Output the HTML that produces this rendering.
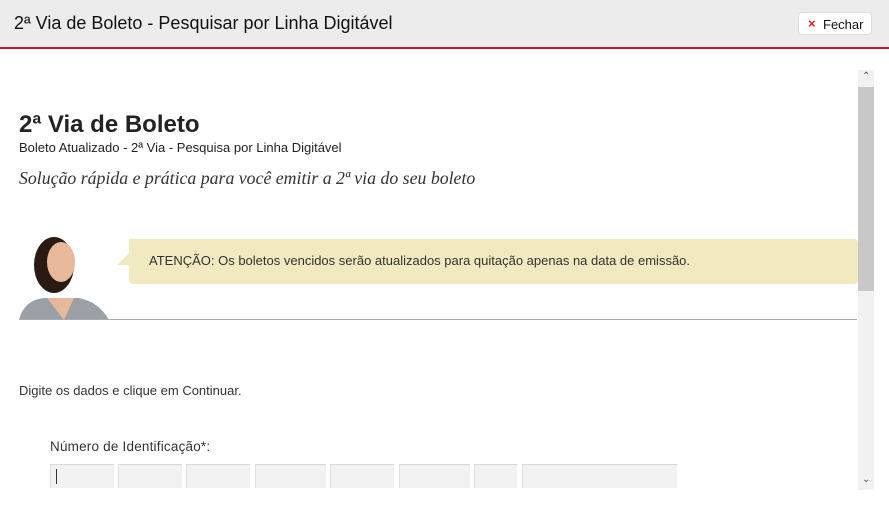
<!DOCTYPE html>
<html><head><meta charset="utf-8"><style>
body{margin:0;width:889px;height:506px;overflow:hidden;background:#fff;font-family:"Liberation Sans",Arial,sans-serif;position:relative}
.hdr{position:absolute;left:0;top:0;width:889px;height:47px;background:#ececec;border-bottom:2px solid #c8102e}
.hdr h1{position:absolute;left:14px;top:13px;margin:0;font-size:18px;font-weight:normal;color:#111}
.btn{position:absolute;left:798px;top:12px;width:74px;height:23px;border:1px solid #ddd;border-radius:4px;background:#fff;font-size:13px;color:#111;box-sizing:border-box}
.btn span{position:absolute;left:9px;top:3px;color:#e02020;font-weight:bold}
.btn b{position:absolute;left:24px;top:4px;font-weight:normal}
.a{position:absolute;white-space:nowrap}
.sb{position:absolute;left:858px;top:70px;width:16px;height:420px;background:#f1f1f1}
.th{position:absolute;left:858px;top:87px;width:16px;height:204px;background:#c8c8c8}
.in{position:absolute;top:464px;height:24px;background:#f2f2f2;border-top:1px solid #d8d8d8;border-left:1px solid #e0e0e0;box-sizing:border-box}
</style></head><body>
<div class="hdr"><h1>2ª Via de Boleto - Pesquisar por Linha Digitável</h1>
<div class="btn"><span>×</span><b>Fechar</b></div></div>
<div class="sb"></div><div class="th"></div>
<div class="a" style="left:862px;top:71px;font-size:10px;color:#555">⌃</div>
<div class="a" style="left:862px;top:474px;font-size:10px;color:#555">⌄</div>
<div class="a" style="left:19px;top:111px;font-size:24px;font-weight:bold;color:#222">2ª Via de Boleto</div>
<div class="a" style="left:19px;top:140px;font-size:13px;color:#222">Boleto Atualizado - 2ª Via - Pesquisa por Linha Digitável</div>
<div class="a" style="left:19px;top:168px;font-size:17.8px;font-style:italic;color:#333;font-family:'Liberation Serif',serif">Solução rápida e prática para você emitir a 2ª via do seu boleto</div>
<svg class="a" style="left:19px;top:220px" width="96" height="100">
<ellipse cx="35" cy="45" rx="20" ry="28" fill="#2a1a14"/>
<ellipse cx="42" cy="42" rx="14" ry="20" fill="#e8b89a"/>
<path d="M0 100 Q5 80 25 78 L60 78 Q80 82 90 100Z" fill="#9aa0a6"/>
<path d="M28 78 L45 100 L55 78Z" fill="#e8b89a"/>
</svg>
<svg class="a" style="left:117px;top:239px" width="742" height="46"><path d="M12 0 H737 a4 4 0 0 1 4 4 V41 a4 4 0 0 1 -4 4 H16 a4 4 0 0 1 -4 -4 V26 L0 26 L12 14Z" fill="#f1e9bf"/></svg>
<div class="a" style="left:149px;top:253px;font-size:13px;color:#333">ATENÇÃO: Os boletos vencidos serão atualizados para quitação apenas na data de emissão.</div>
<div class="a" style="left:19px;top:319px;width:838px;height:1px;background:#aaa"></div>
<div class="a" style="left:19px;top:383px;font-size:13px;color:#333">Digite os dados e clique em Continuar.</div>
<div class="a" style="left:50px;top:439px;font-size:13.5px;color:#333;letter-spacing:0.2px">Número de Identificação*:</div>
<div class="in" style="left:50px;width:64px"><div style="position:absolute;left:5px;top:4px;width:1px;height:15px;background:#333"></div></div>
<div class="in" style="left:118px;width:64px"></div>
<div class="in" style="left:186px;width:64px"></div>
<div class="in" style="left:255px;width:71px"></div>
<div class="in" style="left:330px;width:64px"></div>
<div class="in" style="left:399px;width:71px"></div>
<div class="in" style="left:474px;width:43px"></div>
<div class="in" style="left:522px;width:155px"></div>
</body></html>
